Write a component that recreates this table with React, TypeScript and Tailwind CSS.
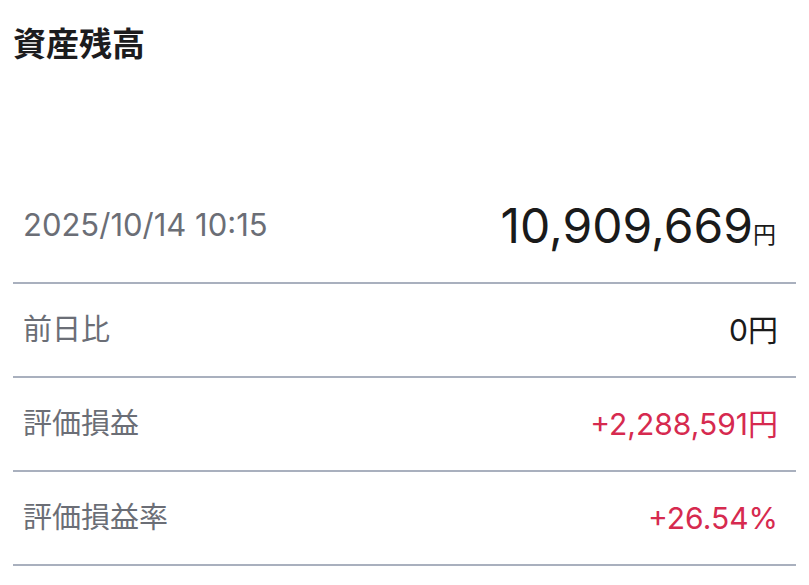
import React from 'react';

interface Row {
  label: string;
  value: string;
  tone: 'plain' | 'up';
}

const rows: Row[] = [
  { label: '前日比', value: '0円', tone: 'plain' },
  { label: '評価損益', value: '+2,288,591円', tone: 'up' },
  { label: '評価損益率', value: '+26.54%', tone: 'up' },
];

const App: React.FC = () => {
  return (
    <div
      className="min-h-screen bg-white px-[13px] pt-[20px]"
      style={{ fontFamily: 'Inter, "Noto Sans CJK JP", sans-serif' }}
    >
      <h1 className="text-[33px] leading-[48px] font-bold text-[#1c1c1e]">資産残高</h1>

      {/* Balance */}
      <div className="mt-[101px] h-[115px] flex items-center justify-between border-b-2 border-[#a9b0be] pl-[10px] pr-[20px]">
        <span className="text-[31px] text-[#6b6e76]">2025/10/14 10:15</span>
        <span className="flex items-baseline text-[#1a1a1a]">
          <span className="text-[48px] leading-none">10,909,669</span>
          <span className="text-[23px] leading-none">円</span>
        </span>
      </div>

      {/* Details */}
      {rows.map((row) => (
        <div
          key={row.label}
          className="h-[94px] flex items-center justify-between border-b-2 border-[#a9b0be] pl-[10px] pr-[18px]"
        >
          <span className="text-[29px] text-[#6b6e76]">{row.label}</span>
          <span className={`text-[30px] ${row.tone === 'up' ? 'text-[#d62a4f]' : 'text-[#1a1a1a]'}`}>
            {row.value}
          </span>
        </div>
      ))}
    </div>
  );
};

export default App;
